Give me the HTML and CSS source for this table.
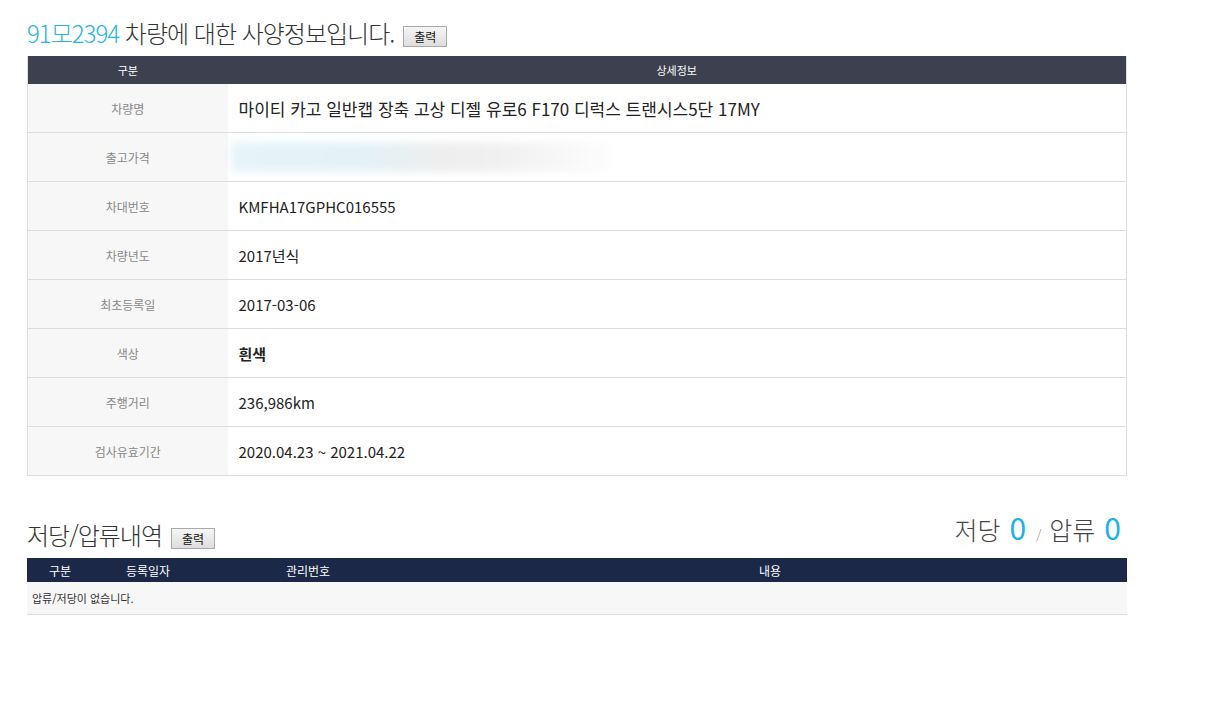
FILE: index.html
```html
<!DOCTYPE html>
<html lang="ko">
<head>
    <meta charset="UTF-8">
    <meta name="viewport" content="width=device-width, initial-scale=1.0">
    <title>차량 사양정보</title>
    <link rel="stylesheet" href="styles.css">
</head>
<body>
    <div class="wrap">
        <div class="title-row">
            <h1 class="title"><span class="plate">91모2394</span> 차량에 대한 사양정보입니다.</h1>
            <button class="print-btn">출력</button>
        </div>

        <table class="spec-table">
            <colgroup>
                <col class="col-label">
                <col>
            </colgroup>
            <thead>
                <tr>
                    <th>구분</th>
                    <th>상세정보</th>
                </tr>
            </thead>
            <tbody>
                <tr>
                    <td class="label">차량명</td>
                    <td class="value big">마이티 카고 일반캡 장축 고상 디젤 유로6 F170 디럭스 트랜시스5단 17MY</td>
                </tr>
                <tr>
                    <td class="label">출고가격</td>
                    <td class="value"><div class="blurred"></div></td>
                </tr>
                <tr>
                    <td class="label">차대번호</td>
                    <td class="value">KMFHA17GPHC016555</td>
                </tr>
                <tr>
                    <td class="label">차량년도</td>
                    <td class="value">2017년식</td>
                </tr>
                <tr>
                    <td class="label">최초등록일</td>
                    <td class="value">2017-03-06</td>
                </tr>
                <tr>
                    <td class="label">색상</td>
                    <td class="value strong">흰색</td>
                </tr>
                <tr>
                    <td class="label">주행거리</td>
                    <td class="value">236,986km</td>
                </tr>
                <tr>
                    <td class="label">검사유효기간</td>
                    <td class="value">2020.04.23 ~ 2021.04.22</td>
                </tr>
            </tbody>
        </table>

        <div class="section-head">
            <div class="title-row">
                <h2 class="title">저당/압류내역</h2>
                <button class="print-btn">출력</button>
            </div>
            <div class="counts">
                저당 <span class="num">0</span> <span class="slash">/</span> 압류 <span class="num">0</span>
            </div>
        </div>

        <table class="lien-table">
            <colgroup>
                <col style="width: 66px">
                <col style="width: 110px">
                <col style="width: 210px">
                <col>
            </colgroup>
            <thead>
                <tr>
                    <th>구분</th>
                    <th>등록일자</th>
                    <th>관리번호</th>
                    <th>내용</th>
                </tr>
            </thead>
            <tbody>
                <tr>
                    <td colspan="4" class="empty">압류/저당이 없습니다.</td>
                </tr>
            </tbody>
        </table>
    </div>
</body>
</html>
```

FILE: styles.css
```css
body {
    margin: 0;
    font-family: "Noto Sans CJK KR", "Noto Sans", sans-serif;
    color: #222;
    background: #fff;
}
.wrap {
    width: 1100px;
    padding: 16px 0 0 27px;
}
.title-row {
    display: flex;
    align-items: flex-end;
}
.title {
    margin: 0;
    font-size: 24px;
    font-weight: 300;
    letter-spacing: -1px;
    line-height: 34px;
    color: #333;
}
.plate {
    color: #26b3e3;
}
.print-btn {
    margin: 0 0 3px 9px;
    width: 44px;
    height: 21px;
    padding: 0;
    font-family: inherit;
    font-size: 12px;
    line-height: 19px;
    color: #111;
    background: linear-gradient(#f6f6f6, #dddddd);
    border: 1px solid #a9a9a9;
    border-radius: 0;
}
table {
    width: 1100px;
    border-collapse: collapse;
    table-layout: fixed;
}
.spec-table {
    margin-top: 6px;
    border-left: 1px solid #ddd;
    border-right: 1px solid #ddd;
}
.col-label {
    width: 200px;
}
.spec-table th {
    height: 28px;
    padding: 0;
    background: #3d414f;
    color: #fff;
    font-size: 11px;
    font-weight: 400;
    text-align: center;
}
.spec-table td {
    height: 48px;
    padding: 0;
    border-bottom: 1px solid #ddd;
}
.label {
    background: #f7f7f7;
    color: #888;
    font-size: 12px;
    text-align: center;
}
.value {
    padding-left: 11px !important;
    font-size: 15px;
    color: #222;
}
.value.big {
    font-size: 17px;
}
.value.strong {
    font-weight: 700;
}
.blurred {
    width: 380px;
    height: 30px;
    margin-left: -8px;
    background: linear-gradient(90deg, #e6f4f8 0%, #e4f2f6 35%, #eeeeee 55%, #f0f0f0 70%, #fdfdfd 100%);
    filter: blur(4px);
}
.section-head {
    display: flex;
    justify-content: space-between;
    align-items: flex-end;
    margin-top: 34px;
}
.counts {
    padding-right: 4px;
    font-size: 25px;
    font-weight: 300;
    color: #444;
    line-height: 34px;
}
.counts .num {
    color: #1fb0e6;
    font-size: 30px;
    font-weight: 400;
    margin: 0 2px;
}
.counts .slash {
    font-size: 13px;
    color: #888;
    margin: 0 1px;
}
.lien-table {
    margin-top: 6px;
}
.lien-table th {
    height: 24px;
    padding: 0;
    background: #1b2847;
    color: #fff;
    font-size: 12px;
    font-weight: 400;
    text-align: center;
}
.lien-table td {
    height: 32px;
    padding: 0 0 0 5px;
    background: #f7f7f7;
    border-bottom: 1px solid #ddd;
    font-size: 11px;
    color: #333;
}
```
